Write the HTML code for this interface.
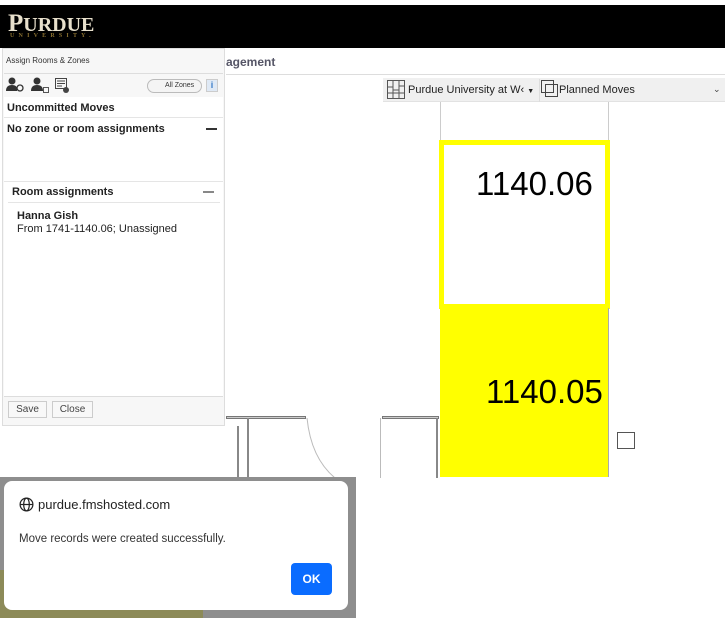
<!DOCTYPE html>
<html><head><style>
*{margin:0;padding:0;box-sizing:border-box}
body{width:725px;height:618px;position:relative;overflow:hidden;background:#fff;font-family:"Liberation Sans",Arial,sans-serif}
.a{position:absolute}
</style></head><body>
<div class="a" style="left:0;top:5px;width:725px;height:43px;background:#000"></div>
<div class="a" style="left:8px;top:10px;color:#e8e0cc;font-family:'Liberation Serif',serif;font-size:25px;font-weight:bold">P<span style="font-size:20px">URDUE</span></div>
<div class="a" style="left:10px;top:33px;color:#8a7030;font-family:'Liberation Serif',serif;font-size:6px;letter-spacing:4.2px;font-weight:bold">UNIVERSITY.</div>
<div class="a" style="left:226px;top:55px;font-size:12px;color:#556;font-weight:bold">agement</div>
<div class="a" style="left:226px;top:74px;width:499px;height:1px;background:#ddd"></div>
<div class="a" style="left:383px;top:78px;width:342px;height:24px;background:#f0f0f0;border-bottom:1px solid #e2e2e2"></div>
<svg class="a" style="left:387px;top:80px" width="18" height="19"><rect x="0.5" y="0.5" width="17" height="18" fill="none" stroke="#555"/><path d="M6 1v18M12 1v18M1 7h5M12 6h6M1 13h17M6 10h6" stroke="#555" fill="none"/></svg>
<div class="a" style="left:408px;top:84px;font-size:11px;color:#222">Purdue University at W‹ <span style="font-size:7px">▼</span></div>
<div class="a" style="left:539px;top:79px;width:1px;height:23px;background:#ddd"></div>
<svg class="a" style="left:541px;top:80px" width="18" height="18"><rect x="0.5" y="0.5" width="12" height="12" fill="none" stroke="#444"/><rect x="4.5" y="4.5" width="12" height="12" fill="none" stroke="#444"/></svg>
<div class="a" style="left:559px;top:84px;font-size:11px;color:#222">Planned Moves</div>
<div class="a" style="left:713px;top:84px;font-size:9px;color:#444">⌄</div>
<div class="a" style="left:440px;top:102px;width:1px;height:40px;background:#ccc"></div>
<div class="a" style="left:608px;top:102px;width:1px;height:40px;background:#ccc"></div>
<div class="a" style="left:439px;top:140px;width:171px;height:169px;border:5px solid #ffff00;background:#fff"></div>
<div class="a" style="left:476px;top:165px;font-size:33px;color:#000">1140.06</div>
<div class="a" style="left:440px;top:308px;width:169px;height:169px;background:#ffff00;border-right:1px solid #aaa"></div>
<div class="a" style="left:486px;top:373px;font-size:33px;color:#000">1140.05</div>
<div class="a" style="left:617px;top:432px;width:18px;height:17px;border:1px solid #555;background:#fff"></div>
<div class="a" style="left:226px;top:416px;width:80px;height:3px;border:1px solid #777;background:#ccc"></div>
<div class="a" style="left:382px;top:416px;width:57px;height:3px;border:1px solid #777;background:#ccc"></div>
<div class="a" style="left:237px;top:426px;width:2px;height:52px;background:#888"></div>
<div class="a" style="left:247px;top:418px;width:2px;height:60px;background:#888"></div>
<div class="a" style="left:380px;top:418px;width:1px;height:60px;background:#bbb"></div>
<div class="a" style="left:436px;top:418px;width:2px;height:60px;background:#888"></div>
<svg class="a" style="left:305px;top:418px" width="40" height="60"><path d="M2 0 Q6 40 30 60" fill="none" stroke="#bbb"/></svg>
<div class="a" style="left:2px;top:48px;width:223px;height:378px;background:#f7f7f7;border:1px solid #ddd"></div>
<div class="a" style="left:6px;top:56px;font-size:8px;color:#333">Assign Rooms &amp; Zones</div>
<div class="a" style="left:4px;top:73px;width:219px;height:1px;background:#ddd"></div>
<svg class="a" style="left:5px;top:76px" width="70" height="20">
<g fill="#333"><circle cx="7" cy="5" r="3.5"/><path d="M1 15q0-6 6-6 5 0 5 4v2z"/><circle cx="15" cy="12" r="3" fill="none" stroke="#333" stroke-width="1.3"/>
<circle cx="32" cy="5" r="3.5"/><path d="M26 15q0-6 6-6 6 0 6 6z"/></g>
<rect x="38.5" y="11.5" width="5" height="5" fill="none" stroke="#555"/>
<rect x="50.5" y="2.5" width="11" height="10" fill="none" stroke="#444"/><path d="M52 5h8M52 7.5h8M52 10h5" stroke="#444"/><circle cx="61" cy="14" r="3" fill="#444"/>
</svg>
<div class="a" style="left:147px;top:79px;width:55px;height:14px;border:1px solid #bbb;border-radius:8px;background:#f4f4f4;font-size:7px;padding:2px 0 0 17px;color:#333">All Zones</div>
<div class="a" style="left:206px;top:79px;width:12px;height:13px;border:1px solid #ccc;background:#dfe9f5;color:#3a7dc9;font-size:9px;text-align:center;font-weight:bold">i</div>
<div class="a" style="left:4px;top:97px;width:219px;height:300px;background:#fff"></div>
<div class="a" style="left:7px;top:102px;font-size:11px;font-weight:bold;color:#222">Uncommitted Moves</div>
<div class="a" style="left:4px;top:117px;width:219px;height:1px;background:#e5e5e5"></div>
<div class="a" style="left:7px;top:123px;font-size:11px;font-weight:bold;color:#222">No zone or room assignments</div>
<div class="a" style="left:206px;top:128px;width:11px;height:1.5px;background:#333"></div>
<div class="a" style="left:4px;top:181px;width:219px;height:1px;background:#e5e5e5"></div>
<div class="a" style="left:12px;top:186px;font-size:11px;font-weight:bold;color:#222">Room assignments</div>
<div class="a" style="left:203px;top:191px;width:11px;height:1.5px;background:#888"></div>
<div class="a" style="left:8px;top:202px;width:212px;height:1px;background:#e5e5e5"></div>
<div class="a" style="left:17px;top:210px;font-size:11px;font-weight:bold;color:#222">Hanna Gish</div>
<div class="a" style="left:17px;top:223px;font-size:11px;color:#222">From 1741-1140.06; Unassigned</div>
<div class="a" style="left:4px;top:396px;width:219px;height:1px;background:#ddd"></div>
<div class="a" style="left:8px;top:401px;width:39px;height:17px;border:1px solid #ccc;background:#f8f8f8;font-size:10px;color:#444;text-align:center;padding-top:2px">Save</div>
<div class="a" style="left:52px;top:401px;width:41px;height:17px;border:1px solid #ccc;background:#f8f8f8;font-size:10px;color:#444;text-align:center;padding-top:2px">Close</div>
<div class="a" style="left:0;top:477px;width:356px;height:141px;background:#8e8e8e"></div>
<div class="a" style="left:0;top:570px;width:203px;height:48px;background:#8c8a58"></div>
<div class="a" style="left:4px;top:481px;width:344px;height:129px;background:#fff;border-radius:8px"></div>
<svg class="a" style="left:19px;top:497px" width="15" height="15" viewBox="0 0 16 16"><g fill="none" stroke="#222" stroke-width="1.3"><circle cx="8" cy="8" r="6.8"/><ellipse cx="8" cy="8" rx="3" ry="6.8"/><path d="M1.2 8h13.6"/></g></svg>
<div class="a" style="left:38px;top:497px;font-size:13px;color:#222">purdue.fmshosted.com</div>
<div class="a" style="left:19px;top:533px;font-size:11.5px;color:#333">Move records were created successfully.</div>
<div class="a" style="left:291px;top:563px;width:41px;height:32px;background:#0a6cff;border-radius:4px;color:#fff;font-size:12px;font-weight:bold;text-align:center;line-height:32px">OK</div>
</body></html>
